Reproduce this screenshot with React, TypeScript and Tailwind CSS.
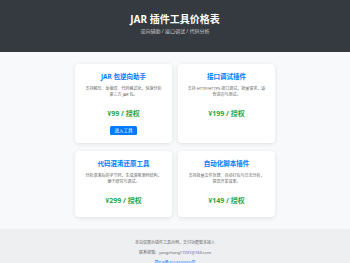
import { FC } from 'react';

type Tool = {
  name: string;
  desc: string;
  price: string;
  link?: boolean;
};

const tools: Tool[] = [
  { name: 'JAR 包逆向助手', desc: '支持解压、反编译、代码格式化，快速分析第三方 JAR 包。', price: '¥99 / 授权', link: true },
  { name: '接口调试插件', desc: '支持 HTTP/HTTPS 接口调试，批量请求，适合逆向与测试。', price: '¥199 / 授权' },
  { name: '代码混淆还原工具', desc: '分析混淆后的字节码，生成清晰源码结构，便于研究与调试。', price: '¥299 / 授权' },
  { name: '自动化脚本插件', desc: '支持批量文件处理、自动打包与日志分析，提高开发效率。', price: '¥149 / 授权' },
];

const ToolCard: FC<{ tool: Tool }> = ({ tool }) => {
  return (
    <div className="flex flex-col items-center rounded-[4px] bg-white px-[9px] pt-[8px] pb-[8px] text-center shadow-[0_1px_4px_rgba(0,0,0,0.1)]">
      <h3 className="text-[6.5px] leading-[9px] font-bold text-[#007bff]">{tool.name}</h3>
      <p className="mt-[5px] text-[4px] leading-[6px] text-[#666]">{tool.desc}</p>
      <div className="mt-[11px] mb-[3px] text-[7px] leading-[10px] font-bold text-[#28a745]">{tool.price}</div>
      {tool.link && (
        <button className="mt-[4px] h-[9.3px] rounded-[1.5px] bg-[#007bff] px-[4.5px] text-[4.5px] leading-[9.3px] text-white">
          进入工具
        </button>
      )}
    </div>
  );
};

const App: FC = () => {
  return (
    <div className="min-h-[263px] bg-[#f8f9fa] font-['Noto_Sans','Noto_Sans_CJK_SC',sans-serif]">
      <header className="flex h-[52px] flex-col items-center bg-[#343a40] pt-[12px]">
        <h1 className="text-[10px] leading-[14px] font-bold text-white">JAR 插件工具价格表</h1>
        <p className="mt-[1.5px] text-[5px] leading-[7px] text-[#ccc]">逆向辅助 / 接口调试 / 代码分析</p>
      </header>

      <main className="py-[12px]">
        <div className="mx-auto grid w-[200px] grid-cols-2 gap-x-[6px] gap-y-[8px]">
          {tools.map((t) => (
            <ToolCard key={t.name} tool={t} />
          ))}
        </div>
      </main>

      <footer className="flex flex-col items-center bg-[#eeeff1] pt-[9px] pb-[4px] text-[4px] text-[#666]">
        <p className="leading-[10px]">本站仅展示插件工具示例，支付功能暂未接入</p>
        <p className="leading-[10px]">联系邮箱：yangchang17231@163.com</p>
        <a className="leading-[9px] text-[#007bff]">鄂ICP备2024000000号</a>
      </footer>
    </div>
  );
};

export default App;
